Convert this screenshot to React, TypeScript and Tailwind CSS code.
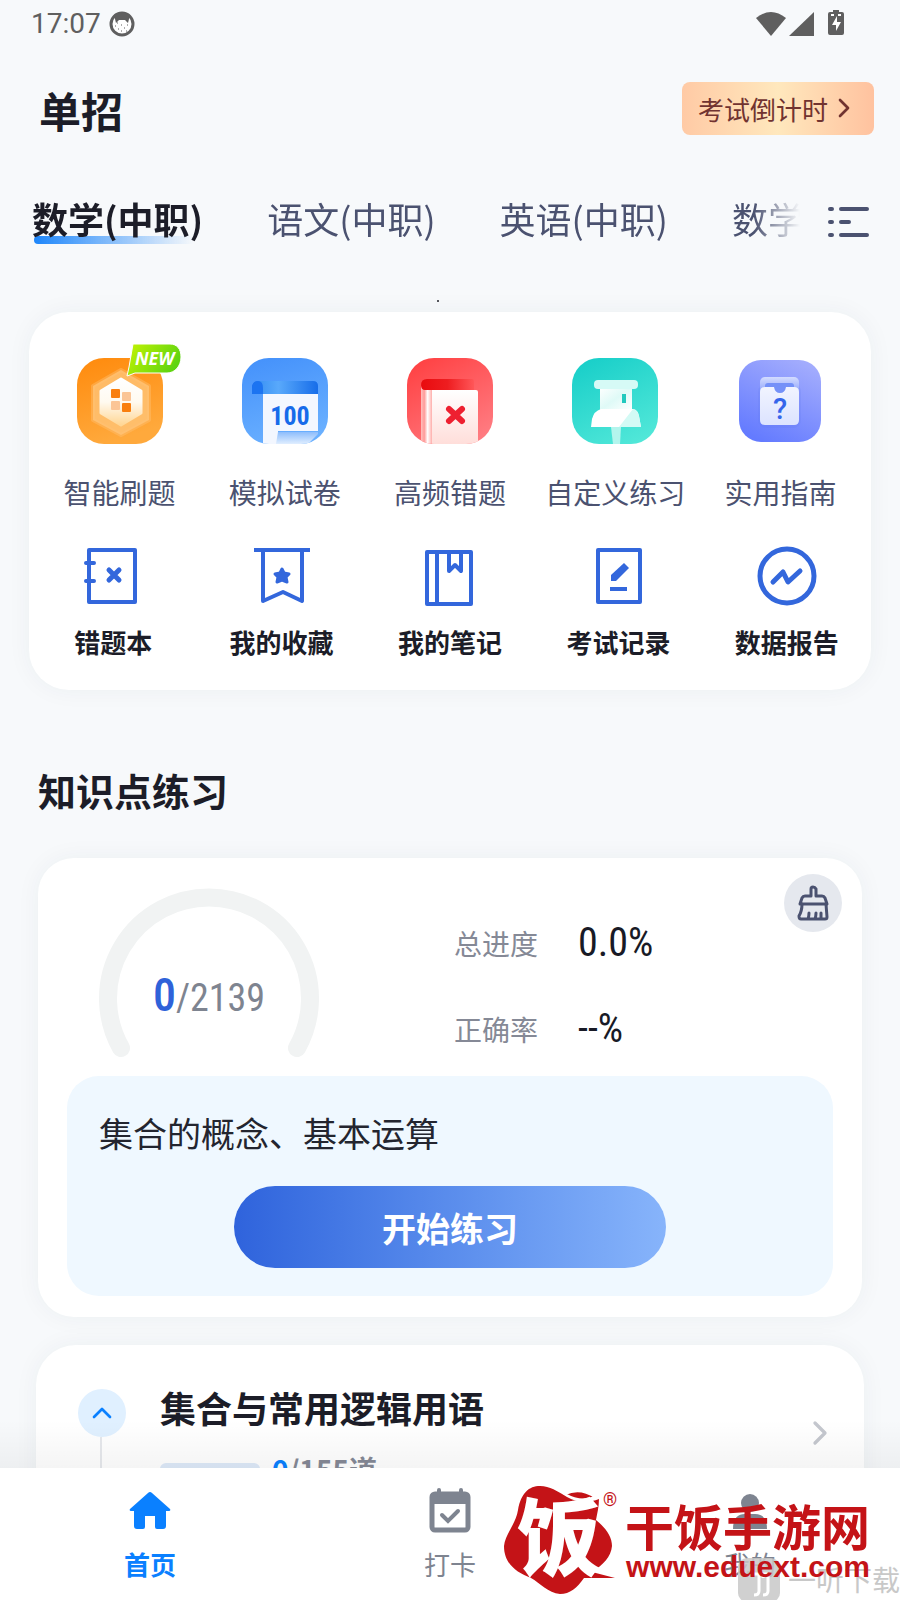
import type { ReactNode } from "react";
import { ChevronRight, ChevronUp } from "lucide-react";

const subjects = ["数学(中职)", "语文(中职)", "英语(中职)", "数学(普高)"];

const mainTools: { label: string; icon: ReactNode }[] = [
  { label: "智能刷题", icon: <PracticeIcon /> },
  { label: "模拟试卷", icon: <PaperIcon /> },
  { label: "高频错题", icon: <MistakeIcon /> },
  { label: "自定义练习", icon: <PinIcon /> },
  { label: "实用指南", icon: <GuideIcon /> },
];

const subTools: { label: string; icon: ReactNode }[] = [
  {
    label: "错题本",
    icon: (
      <>
        <rect x="6" y="4" width="46" height="52" />
        <path d="M3 17h8M3 35h8" strokeLinecap="round" />
        <path d="M26 24l10 10M36 24L26 34" strokeWidth="5" strokeLinecap="round" />
      </>
    ),
  },
  {
    label: "我的收藏",
    icon: (
      <>
        <path d="M2 4h56M11 4v51l20-9 19 9V4" />
        <path d="M30 23l2 4 5 1-3 3 1 5-5-2-5 2 1-5-3-3 5-1z" fill="#3367dc" strokeWidth="3" />
      </>
    ),
  },
  {
    label: "我的笔记",
    icon: (
      <>
        <rect x="7" y="6" width="44" height="52" />
        <path d="M17 6v52M29 6v19l6-6 6 6V6" />
      </>
    ),
  },
  {
    label: "考试记录",
    icon: (
      <>
        <rect x="10" y="4" width="42" height="52" />
        <path d="M22 43h17" />
        <path d="M23 35v-6l13-12 5 5-13 13z" fill="#3367dc" stroke="none" />
      </>
    ),
  },
  {
    label: "数据报告",
    icon: (
      <>
        <circle cx="30" cy="30" r="27" strokeWidth="5" />
        <path d="M16 36l10-10 5 10 12-11" strokeWidth="5" strokeLinecap="round" />
      </>
    ),
  },
];

function PracticeIcon() {
  return (
    <svg width="86" height="86" viewBox="0 0 86 86" className="overflow-visible">
      <defs>
        <linearGradient id="orange" x1="0" y1="0" x2="0.3" y2="1">
          <stop stopColor="#ff8a0c" />
          <stop offset="1" stopColor="#ffa93c" />
        </linearGradient>
        <linearGradient id="hex" x1="0" y1="0" x2="0" y2="1">
          <stop stopColor="#fff" />
          <stop offset="0.5" stopColor="#fffaf0" />
          <stop offset="1" stopColor="#ffd694" />
        </linearGradient>
        <linearGradient id="lime" x1="0" y1="0" x2="1" y2="0.4">
          <stop stopColor="#c6f402" />
          <stop offset="1" stopColor="#5fd411" />
        </linearGradient>
      </defs>
      <rect width="86" height="86" rx="27" fill="url(#orange)" />
      <path d="M44 12l28 16v34L44 77 16 62V28z" fill="#ffc478" fillOpacity="0.8" stroke="#ffc478" strokeOpacity="0.4" strokeWidth="4" strokeLinejoin="round" />
      <path d="M44 21l20 12v22L44 67 24 55V33z" fill="url(#hex)" stroke="url(#hex)" strokeWidth="3" strokeLinejoin="round" />
      <rect x="34" y="31" width="9" height="9" rx="1" fill="#f97f0f" />
      <rect x="45" y="34" width="9" height="9" rx="1" fill="#fbc596" />
      <rect x="34" y="43" width="9" height="9" rx="1" fill="#fbc596" />
      <rect x="45" y="45" width="9" height="9" rx="1" fill="#f97f0f" />
      <path d="M56-14h37c7 0 11 5 11 13 0 9-6 16-14 16H58l-8 3 2-9z" fill="url(#lime)" stroke="#fff" strokeWidth="1" strokeLinejoin="round" />
      <text x="58" y="7" fill="#fff" fontFamily="Open Sans, sans-serif" fontSize="18" fontWeight="700" fontStyle="italic">NEW</text>
    </svg>
  );
}

function PaperIcon() {
  return (
    <svg width="86" height="86" viewBox="0 0 86 86">
      <defs>
        <linearGradient id="blue" x1="0.2" y1="0" x2="0.5" y2="1">
          <stop stopColor="#4592fb" />
          <stop offset="1" stopColor="#6ab0ff" />
        </linearGradient>
        <linearGradient id="roll">
          <stop stopColor="#1268ef" />
          <stop offset="0.12" stopColor="#3d94f5" />
          <stop offset="0.4" stopColor="#59a9fb" />
          <stop offset="1" stopColor="#176de9" />
        </linearGradient>
        <linearGradient id="curl" x1="0" y1="0" x2="0" y2="1">
          <stop stopColor="#8dbdfc" />
          <stop offset="1" stopColor="#e0eeff" />
        </linearGradient>
        <clipPath id="tile">
          <rect width="86" height="86" rx="27" />
        </clipPath>
      </defs>
      <g clipPath="url(#tile)">
        <rect width="86" height="86" fill="url(#blue)" />
        <path d="M10 36v-6q0-7 7-7h54q5 0 5 5v8z" fill="url(#roll)" />
        <path d="M10 36v-6q0-7 6-7 5 0 5 7v6z" fill="#1c74f1" />
        <path d="M21 36h55v37H36v13H21z" fill="#f3f7ff" />
        <path d="M36 74h40v2L66 86H34z" fill="url(#curl)" />
      </g>
      <text x="48" y="67" textAnchor="middle" fill="#176bea" fontFamily="Roboto Condensed, Roboto, sans-serif" fontSize="26" fontWeight="700">100</text>
    </svg>
  );
}

function MistakeIcon() {
  return (
    <svg width="86" height="86" viewBox="0 0 86 86">
      <defs>
        <linearGradient id="red" x1="0.2" y1="0" x2="0.8" y2="1">
          <stop stopColor="#ff4244" />
          <stop offset="1" stopColor="#ff7d83" />
        </linearGradient>
        <linearGradient id="cover">
          <stop stopColor="#e90b0f" />
          <stop offset="0.5" stopColor="#ee1d20" />
          <stop offset="1" stopColor="#ff5658" />
        </linearGradient>
        <linearGradient id="spine">
          <stop stopColor="#ffbfbd" />
          <stop offset="0.3" stopColor="#ff9a98" />
          <stop offset="0.6" stopColor="#fff" />
          <stop offset="1" stopColor="#ffaeab" />
        </linearGradient>
        <linearGradient id="page" x1="0" y1="0" x2="0" y2="1">
          <stop stopColor="#fff" />
          <stop offset="1" stopColor="#ffdeda" />
        </linearGradient>
      </defs>
      <g clipPath="url(#tile)">
        <rect width="86" height="86" fill="url(#red)" />
        <path d="M14 26h11v60H14z" fill="url(#spine)" />
        <path d="M14 27q0-6 6-6h45q2 0 2 2v9H18q-4 0-4-5z" fill="url(#cover)" />
        <path d="M25 32h44q2 0 2 2v52H25z" fill="url(#page)" />
        <path d="M42 51l13 12M55 51L42 63" stroke="#ee2030" strokeWidth="6" strokeLinecap="round" />
      </g>
    </svg>
  );
}

function PinIcon() {
  return (
    <svg width="86" height="86" viewBox="0 0 86 86">
      <defs>
        <linearGradient id="teal" x1="0.2" y1="0" x2="0.7" y2="1">
          <stop stopColor="#19cfc9" />
          <stop offset="1" stopColor="#50e7d8" />
        </linearGradient>
        <linearGradient id="pin" x1="0" y1="0" x2="1" y2="1">
          <stop stopColor="#fff" />
          <stop offset="0.5" stopColor="#dffaf7" />
          <stop offset="1" stopColor="#fff" />
        </linearGradient>
      </defs>
      <g clipPath="url(#tile)">
        <rect width="86" height="86" fill="url(#teal)" />
        <path d="M39 69h10l-1 17h-7z" fill="#b3f5ed" />
        <path d="M28 29h32v23H28z" fill="url(#pin)" />
        <rect x="22" y="22" width="44" height="9" rx="4" fill="#d6faf6" />
        <path d="M29 51h32q5 1 6 7l2 11H19l1-8q2-8 9-10z" fill="#fff" />
        <path d="M61 51q5 1 6 7l2 11H47z" fill="#d3faf5" />
        <rect x="50" y="36" width="4" height="9" fill="#22c9be" />
      </g>
    </svg>
  );
}

function GuideIcon() {
  return (
    <svg width="86" height="86" viewBox="-2 -2 86 86">
      <defs>
        <linearGradient id="violet" x1="0.8" y1="0" x2="0.3" y2="1">
          <stop stopColor="#a4adfd" />
          <stop offset="1" stopColor="#647bff" />
        </linearGradient>
        <linearGradient id="slip" x1="0" y1="0" x2="0" y2="1">
          <stop stopColor="#d3dcff" />
          <stop offset="0.5" stopColor="#8fa4fb" />
        </linearGradient>
        <linearGradient id="bag" x1="0" y1="0" x2="0" y2="1">
          <stop stopColor="#f1f4ff" />
          <stop offset="1" stopColor="#dce3ff" />
        </linearGradient>
      </defs>
      <rect width="82" height="82" rx="22" fill="url(#violet)" />
      <rect x="19" y="24" width="43" height="44" rx="8" fill="#5a72ec" fillOpacity="0.15" />
      <rect x="21" y="17" width="39" height="30" rx="5" fill="url(#slip)" />
      <rect x="26" y="23" width="29" height="12" rx="3" fill="#7491f8" />
      <path d="M26 27h9q1 6 6 6t6-6h8q5 0 5 5v28q0 5-5 5H26q-5 0-5-5V32q0-5 5-5z" fill="url(#bag)" />
      <text x="41" y="59" textAnchor="middle" fill="#3565eb" fontFamily="Roboto, sans-serif" fontSize="29" fontWeight="500">?</text>
    </svg>
  );
}

function StatusBar() {
  return (
    <div className="flex h-12 items-center justify-between pr-14 pl-[31px] text-[#5f5f5f]">
      <div className="flex items-center gap-2 font-[Roboto] text-[28px] leading-8">
        <span>17:07</span>
        <svg width="26" height="26" viewBox="0 0 26 26" fill="none">
          <circle cx="13" cy="13" r="11" fill="#fff" stroke="currentColor" strokeWidth="3" />
          <path d="M5 4q8-6 16 0l-2 8-3-3h-6l-3 3z" fill="currentColor" />
          <path d="M6 15h1M9 18h1M12 14h1M15 17h1M18 14h1M12 20h1M17 20h1M8 12h1" stroke="currentColor" />
        </svg>
      </div>
      <svg width="88" height="28" viewBox="0 0 88 28" fill="currentColor">
        <path d="M0 8Q15-4 30 8L15 26z" />
        <path d="M58 2v24H33z" />
        <path d="M77 0h6v2h3q2 0 2 2v19q0 2-2 2H74q-2 0-2-2V4q0-2 2-2h3z" />
        <path d="M81 6l-5 9h4v6l5-9h-4zM75 4h3v2h-3zM82 4h3v2h-3z" fill="#fff" />
      </svg>
    </div>
  );
}

function BroomIcon() {
  return (
    <svg width="32" height="36" viewBox="0 0 32 36" fill="none" stroke="#4b5270" strokeWidth="3" strokeLinejoin="round" strokeLinecap="round">
      <path d="M14 11V4q0-2 2-2t3 2v7h6q2 0 3 2l2 6H3l2-6q1-2 3-2z" />
      <path d="M5 19q0 7-3 12 0 3 2 3h24q2 0 2-2l-1-13M11 34q1-3 1-6M18 34q1-3 1-6M24 34v-6" />
    </svg>
  );
}

function ProgressCard() {
  return (
    <section className="relative mx-[38px] mt-10 rounded-[36px] bg-white pb-[21px] shadow-[0_0_24px_rgba(40,50,80,0.05)]">
      <button aria-label="清空记录" className="absolute top-4 right-5 flex size-[58px] items-center justify-center rounded-full bg-[#e5e8ee]">
        <BroomIcon />
      </button>
      <div className="flex h-[218px] items-start pl-[60px]">
        <div className="relative mt-[27px] w-[222px]">
          <svg width="222" height="180" viewBox="0 0 222 180" fill="none">
            <path d="M23 163A101 101 0 1 1 199 163" stroke="#f1f3f3" strokeWidth="18" strokeLinecap="round" />
          </svg>
          <p className="absolute inset-x-0 top-20 text-center font-['Roboto_Condensed',Roboto,sans-serif] text-[38px] leading-[60px] text-[#7e8490]">
            <span className="text-[46px] font-medium text-[#2f62d9]">0</span>/2139
          </p>
        </div>
        <dl className="mt-15 ml-[134px] grid grid-cols-[124px_auto] gap-y-9 text-[28px] leading-[50px]">
          <dt className="text-[#858996]">总进度</dt>
          <dd className="font-['Roboto_Condensed',Roboto,sans-serif] text-[40px] text-[#181a26]">0.0%</dd>
          <dt className="text-[#858996]">正确率</dt>
          <dd className="font-['Roboto_Condensed',Roboto,sans-serif] text-[40px] text-[#181a26]">--%</dd>
        </dl>
      </div>
      <div className="mx-[29px] rounded-[32px] bg-[#eff8ff] px-8 pt-8 pb-7">
        <p className="text-[34px] leading-[50px] text-[#23252f]">集合的概念、基本运算</p>
        <button className="mx-auto mt-7 block h-[82px] w-full max-w-[432px] rounded-full bg-linear-to-r from-[#2f63dc] to-[#87b4fb] text-[34px] font-bold text-white">
          开始练习
        </button>
      </div>
    </section>
  );
}

function ChapterCard() {
  return (
    <section className="mx-9 mt-7 flex rounded-[40px] bg-white px-9 pt-9 shadow-[0_0_24px_rgba(40,50,80,0.05)]">
      <div className="flex w-[88px] flex-col items-start pt-2 pl-[6px]">
        <button aria-label="收起" className="flex size-12 items-center justify-center rounded-full bg-[#e0f0ff] text-[#0a80ff]">
          <ChevronUp size={32} strokeWidth={2} />
        </button>
        <div className="ml-[22px] h-40 w-[2px] bg-[#e6e8ec]" />
      </div>
      <div className="flex-1">
        <h3 className="text-[36px] leading-[52px] font-bold text-[#1c1d28]">集合与常用逻辑用语</h3>
        <div className="mt-4 flex items-center gap-3">
          <div className="h-3 w-[100px] rounded-full bg-[#dde9f8]" />
          <p className="text-[28px] leading-10 font-bold text-[#858996]">
            <span className="text-[#0a80ff]">0</span>/155道
          </p>
        </div>
      </div>
      <ChevronRight size={40} strokeWidth={2} className="mt-8 -mr-3 text-[#c4c7ce]" />
    </section>
  );
}

function BottomNav() {
  return (
    <nav className="relative grid h-[132px] shrink-0 grid-cols-3 bg-white text-[26px] leading-9 text-[#7e8490]">
      <div className="pointer-events-none absolute inset-x-0 bottom-full h-12 bg-linear-to-b from-transparent to-black/4" />
      <a href="#home" className="flex flex-col items-center pt-5 font-bold text-[#0a80ff]">
        <svg width="44" height="44" viewBox="0 0 44 44" fill="currentColor" className="mb-[14px]">
          <path d="M20 5q2-2 4 0l18 16q1 2-1 2h-3v15q0 3-3 3h-6q-2 0-2-2V28H17v11q0 2-2 2H9q-3 0-3-3V23H3q-2 0-1-2z" />
        </svg>
        首页
      </a>
      <a href="#checkin" className="flex flex-col items-center pt-5">
        <svg width="44" height="48" viewBox="0 0 44 48" fill="none" stroke="currentColor" className="mb-[10px]">
          <rect x="4" y="6" width="36" height="36" rx="3" strokeWidth="5" />
          <path d="M4 6h36v10H4z" fill="currentColor" stroke="none" />
          <path d="M11 2v5M33 2v5M14 27l6 6 10-10" strokeWidth="4" strokeLinecap="round" />
        </svg>
        打卡
      </a>
      <a href="#me" className="flex flex-col items-center pt-6">
        <svg width="44" height="40" viewBox="0 0 44 40" fill="currentColor" className="mb-[14px]">
          <circle cx="22" cy="11" r="9" />
          <path d="M5 37q0-15 12-15h10q12 0 12 15z" />
        </svg>
        我的
      </a>
    </nav>
  );
}

function SiteMark() {
  return (
    <div className="pointer-events-none absolute right-0 bottom-0 h-[120px] w-[400px]">
      <div className="absolute right-0 bottom-0 flex items-center text-[28px] leading-[42px] whitespace-nowrap text-[#c8c8c8]">
        <svg width="42" height="42" viewBox="0 0 42 42" className="mr-2">
          <rect width="42" height="44" rx="9" fill="#c8c8c8" fillOpacity="0.85" />
          <path d="M16 16h5v17q0 4-5 4M25 20v-4h5v17q0 4-5 4" stroke="#fff" strokeWidth="3" fill="none" />
        </svg>
        一听下载
      </div>
      <svg width="120" height="120" viewBox="0 0 120 120" className="absolute top-0 left-0">
        <path d="M40 6c10 0 17 5 27 11 11 6 22 6 32 2 0 8-2 15-3 21 10 8 16 17 16 26-1 11-9 19-20 26l23 6H84c-7 10-14 16-24 16-12-1-20-11-29-16C17 93 4 84 4 66c1-12 12-22 14-36C21 13 29 6 40 6z" fill="#c41317" />
        <path d="M65 14q15-7 30 3-14 6-30-3z" fill="#c41317" stroke="#fff" strokeWidth="2" />
        <text x="17" y="89" fill="#fff" fontFamily="Noto Sans CJK SC, sans-serif" fontSize="84" fontWeight="900">饭</text>
      </svg>
      <span className="absolute top-2 left-[103px] text-[18px] leading-6 font-[Roboto] text-[#c41317]">®</span>
      <div className="absolute top-5 right-[30px] text-right font-bold text-[#c41317]">
        <div className="text-[49px] leading-[50px]">干饭手游网</div>
        <div className="font-['Liberation_Sans'] text-[30px] leading-[34px]">www.eduext.com</div>
      </div>
    </div>
  );
}

export default function App() {
  return (
    <div className="relative flex h-screen flex-col overflow-hidden bg-[#f7f9fb] font-['Noto_Sans_CJK_SC',sans-serif] text-[#1c1d28]">
      <main className="min-h-0 flex-1 overflow-y-auto [scrollbar-width:none]">
        <StatusBar />

        <header className="mt-8 flex h-14 items-center justify-between pr-[26px] pl-[39px]">
          <h1 className="pt-1 text-[42px] leading-[56px] font-bold">单招</h1>
          <button className="flex h-[53px] items-center rounded-lg bg-linear-to-r from-[#ffcaa5] via-[#ffe8bd] to-[#ffc29f] pr-[14px] pl-4 text-[26px] text-[#713330]">
            考试倒计时
            <ChevronRight size={32} strokeWidth={2} />
          </button>
        </header>

        <div className="mt-14 flex h-14 items-center pr-[30px] pl-8">
          <div className="flex min-w-0 flex-1 gap-16 overflow-hidden mask-r-from-94% pb-1 text-[36px] leading-[52px] whitespace-nowrap text-[#4b5270]">
            {subjects.map((subject, i) => (
              <a
                key={subject}
                href="#subject"
                className={i === 0 ? "relative font-bold text-[#1c1d28]" : ""}
              >
                {i === 0 && (
                  <span className="absolute bottom-0 left-[2px] h-2 w-40 rounded-full bg-linear-to-r from-[#1e86fa] to-transparent" />
                )}
                <span className="relative">{subject}</span>
              </a>
            ))}
          </div>
          <button aria-label="全部科目" className="ml-7 pt-1">
            <svg width="42" height="34" viewBox="0 0 42 34" stroke="#4b5270" strokeWidth="4" strokeLinecap="round">
              <path d="M2 4h2M2 17h2M2 30h2M13 4h26M13 17h8M13 30h26" />
            </svg>
          </button>
        </div>

        <div className="flex h-16 items-end justify-center pr-6 pb-[10px]">
          <span className="size-[2px] bg-[#55565c]" />
        </div>

        <section className="mx-[29px] rounded-[40px] bg-white pt-[46px] pb-[30px] shadow-[0_0_24px_rgba(40,50,80,0.05)]">
          <div className="grid grid-cols-5 px-2">
            {mainTools.map((tool) => (
              <a key={tool.label} href="#tool" className="flex flex-col items-center text-[28px] leading-10 whitespace-nowrap text-[#4b5270]">
                {tool.icon}
                <span className="mt-7">{tool.label}</span>
              </a>
            ))}
          </div>
          <div className="mt-[34px] grid grid-cols-5">
            {subTools.map((tool) => (
              <a key={tool.label} href="#tool" className="flex flex-col items-center text-[26px] leading-9 font-bold whitespace-nowrap">
                <svg width="60" height="60" viewBox="0 0 60 60" fill="none" stroke="#3367dc" strokeWidth="4" strokeLinejoin="round">
                  {tool.icon}
                </svg>
                <span className="mt-[18px]">{tool.label}</span>
              </a>
            ))}
          </div>
        </section>

        <h2 className="mt-[72px] pl-[38px] text-[38px] leading-[56px] font-bold">知识点练习</h2>
        <ProgressCard />
        <ChapterCard />
      </main>
      <BottomNav />
      <SiteMark />
    </div>
  );
}
